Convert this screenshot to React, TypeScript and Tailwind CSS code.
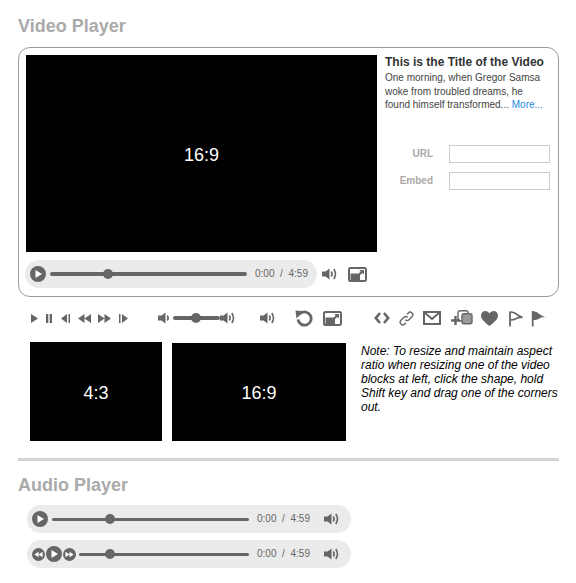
import React from "react";

const G = "#666666";

function Speaker({ low = false, className = "" }: { low?: boolean; className?: string }) {
  return (
    <svg width="15" height="14" viewBox="0 0 15 14" className={`shrink-0 ${className}`}>
      <path d="M0 4.500h3.500L7.500 1.500v11l-4-3H0z" fill={G} />
      <path d="M9.300 4.500c1 1.500 1 3.500 0 5" stroke={G} strokeWidth="1.600" fill="none" />
      {!low && <path d="M11.800 2c2 3 2 7 0 10" stroke={G} strokeWidth="1.600" fill="none" />}
    </svg>
  );
}

function Resize({ className = "" }: { className?: string }) {
  return (
    <svg width="19" height="15" viewBox="0 0 19 15" className={`shrink-0 ${className}`}>
      <rect x="1" y="1" width="17" height="13" rx="1.500" fill="#fff" stroke={G} strokeWidth="2" />
      <rect x="2.500" y="6.500" width="9.500" height="6.500" fill={G} />
      <path d="M11 3h5v4.500l-1.600-1.600-2.600 2.400-1.400-1.400 2.400-2.600z" fill={G} />
    </svg>
  );
}

function Round({ r, kind }: { r: number; kind: "play" | "back" | "fwd" }) {
  const s = r * 2;
  return (
    <svg width={s} height={s} viewBox="0 0 16 16" className="shrink-0">
      <circle cx="8" cy="8" r="8" fill={G} />
      {kind === "play" && <path d="M5.500 4l6.500 4-6.500 4z" fill="#fff" />}
      {kind === "back" && <path d="M8 4.500v7L3 8zM13 4.500v7L8 8z" fill="#fff" />}
      {kind === "fwd" && <path d="M3 4.500v7L8 8zM8 4.500v7l5-3.500z" fill="#fff" />}
    </svg>
  );
}

function Track({ knob, h = "h-[3px]", className = "" }: { knob: number; h?: string; className?: string }) {
  return (
    <div className={`relative flex-1 rounded-full bg-[#666] ${h} ${className}`}>
      <div className="absolute top-1/2 h-[10px] w-[10px] -translate-x-1/2 -translate-y-1/2 rounded-full bg-[#666]" style={{ left: knob }} />
    </div>
  );
}

function Time() {
  return (
    <div className="flex w-[53px] shrink-0 justify-between text-[10px] leading-none text-[#666]">
      <span>0:00</span>
      <span>/</span>
      <span>4:59</span>
    </div>
  );
}

function Small({ d, w = 9, vb = "0 0 9 9", className = "" }: { d: string; w?: number; vb?: string; className?: string }) {
  return (
    <svg width={w} height="9" viewBox={vb} className={`shrink-0 ${className}`}>
      <path d={d} fill={G} />
    </svg>
  );
}

function AudioPill({ extended = false }: { extended?: boolean }) {
  return (
    <div className="ml-[9px] flex h-[28px] w-[324px] items-center rounded-full bg-[#ebebeb] pr-[12px]">
      {extended ? (
        <div className="ml-[5px] mr-[3px] flex items-center gap-[1px]">
          <Round r={6.5} kind="back" />
          <Round r={8} kind="play" />
          <Round r={6.5} kind="fwd" />
        </div>
      ) : (
        <div className="ml-[5px] mr-[4px]">
          <Round r={8} kind="play" />
        </div>
      )}
      <Track knob={extended ? 31 : 58} />
      <div className="ml-[8px]">
        <Time />
      </div>
      <Speaker className="ml-[14px]" />
    </div>
  );
}

function Field({ label }: { label: string }) {
  return (
    <div className="flex items-center">
      <span className="w-[48px] text-right text-[10px] font-bold text-[#aaa]">{label}</span>
      <div className="ml-[16px] h-[18px] w-[101px] border border-[#ccc] bg-white" />
    </div>
  );
}

function Block({ label, w, h, className = "" }: { label: string; w: string; h: string; className?: string }) {
  return (
    <div className={`flex items-center justify-center bg-black pt-[3px] text-[18px] text-white ${w} ${h} ${className}`}>{label}</div>
  );
}

export default function App() {
  return (
    <div className="h-[583px] w-[576px] overflow-hidden bg-white pl-[18px] pt-[16px] font-['Liberation_Sans',Arial,sans-serif]">
      <h1 className="h-[20px] text-[18px] font-bold leading-[20px] text-[#aaa]">Video Player</h1>

      <section className="mt-[11px] flex h-[250px] w-[541px] rounded-[12px] border border-[#999] p-[7px]">
        <div className="w-[351px] shrink-0">
          <div className="flex h-[197px] w-[351px] items-center justify-center bg-black pt-[3px] text-[18px] text-white">16:9</div>
          <div className="mt-[8px] flex items-center">
            <div className="-ml-[1px] flex h-[28px] w-[292px] items-center rounded-full bg-[#ebebeb] pr-[9px]">
              <div className="ml-[5px] mr-[4px]">
                <Round r={8} kind="play" />
              </div>
              <Track knob={58} h="h-[4px]" />
              <div className="ml-[8px]">
                <Time />
              </div>
            </div>
            <Speaker className="ml-[5px]" />
            <Resize className="ml-[11px]" />
          </div>
        </div>
        <div className="ml-[8px] flex-1">
          <h2 className="text-[12px] font-bold leading-[14px] text-[#333]">This is the Title of the Video</h2>
          <p className="mt-[2px] w-[160px] text-[10px] leading-[13.5px] text-[#444]">
            One morning, when Gregor Samsa woke from troubled dreams, he found himself transformed...{" "}
            <span className="text-[#1e88e5]">More...</span>
          </p>
          <div className="mt-[33px] flex flex-col gap-[9px]">
            <Field label="URL" />
            <Field label="Embed" />
          </div>
        </div>
      </section>

      <div className="ml-[13px] mt-[13px] flex h-[16px] items-center">
        <Small w={7} vb="0 0 7 9" d="M0 0l7 4.500L0 9z" />
        <Small w={6} vb="0 0 6 9" d="M0 0h2.300v9H0zM3.700 0H6v9H3.700z" className="ml-[8px]" />
        <Small d="M6 0v9L0 4.500zM7.500 0H9v9H7.500z" className="ml-[9px]" />
        <Small w={13} vb="0 0 13 9" d="M6.500 0v9L0 4.500zM13 0v9L6.500 4.500z" className="ml-[8px]" />
        <Small w={13} vb="0 0 13 9" d="M0 0v9l6.500-4.500zM6.500 0v9L13 4.500z" className="ml-[7px]" />
        <Small d="M0 0h1.500v9H0zM3 0v9l6-4.500z" className="ml-[8px]" />
        <Speaker low className="ml-[30px]" />
        <div className="ml-[0px] flex w-[47px] items-center">
          <Track knob={23} h="h-[4px]" />
        </div>
        <Speaker className="ml-[0px]" />
        <Speaker className="ml-[25px]" />
        <svg width="18" height="17" viewBox="0 0 18 17" className="ml-[20px] shrink-0">
          <path d="M5.200 3.600A6.600 6.600 0 1 1 3 9.500" fill="none" stroke={G} strokeWidth="2.800" />
          <path d="M0.500 0.500l8.500.8L1.500 8.500z" fill={G} />
        </svg>
        <Resize className="ml-[10px]" />
        <svg width="16" height="12" viewBox="0 0 16 12" className="ml-[32px] shrink-0">
          <path d="M6 1L1.800 6 6 11M10 1l4.200 5L10 11" fill="none" stroke={G} strokeWidth="2.600" />
        </svg>
        <svg width="15" height="15" viewBox="0 0 15 15" className="ml-[9px] shrink-0">
          <path d="M6.300 8.700a2.600 2.600 0 0 0 3.700 0l3-3a2.600 2.600 0 0 0-3.700-3.700L8 3.300M8.700 6.300a2.600 2.600 0 0 0-3.700 0l-3 3a2.600 2.600 0 0 0 3.700 3.700L7 11.700" fill="none" stroke={G} strokeWidth="1.400" />
        </svg>
        <svg width="18" height="14" viewBox="0 0 18 14" className="ml-[9px] shrink-0">
          <rect x="1" y="1" width="16" height="12" fill="#fff" stroke={G} strokeWidth="2" />
          <path d="M1.500 1.500L9 8l7.500-6.500" fill="none" stroke={G} strokeWidth="1.800" />
        </svg>
        <svg width="22" height="17" viewBox="0 0 22 17" className="ml-[10px] shrink-0">
          <rect x="7" y="0.700" width="10" height="10" rx="2" fill="#fff" stroke={G} strokeWidth="1.400" />
          <rect x="11" y="3.700" width="10" height="10" rx="2" fill="#999" stroke={G} strokeWidth="1.400" />
          <path d="M0 10.500h9M4.500 6v9" stroke={G} strokeWidth="2.400" />
        </svg>
        <svg width="17" height="15" viewBox="0 0 17 15" className="ml-[8px] shrink-0">
          <path d="M8.500 15C3 10.500 0 8 0 4.500 0 2 2 0 4.400 0c1.700 0 3.200.9 4.100 2.400C9.400.9 10.900 0 12.600 0 15 0 17 2 17 4.500 17 8 14 10.500 8.500 15z" fill={G} />
        </svg>
        <svg width="16" height="17" viewBox="0 0 16 17" className="ml-[10px] shrink-0">
          <path d="M2 16.500V1.500" stroke={G} strokeWidth="1.800" />
          <path d="M2.500 2c4 0 5 1 7 3l5 2.500c-3-.5-4.500 0-6 1-2 1-4 1.500-6 1.500" fill="none" stroke={G} strokeWidth="1.600" />
        </svg>
        <svg width="15" height="17" viewBox="0 0 15 17" className="ml-[7px] shrink-0">
          <path d="M1.700 16.500V1" stroke={G} strokeWidth="1.800" />
          <path d="M2 1.500c4 0 5 1.500 7 3l5.500 3c-3-.5-4.500 0-6 1-2 1-4 1.500-6.500 1.500z" fill={G} />
        </svg>
      </div>

      <div className="mt-[16px] flex items-start pl-[12px]">
        <Block label="4:3" w="w-[132px]" h="h-[99px]" />
        <Block label="16:9" w="w-[174px]" h="h-[98px]" className="ml-[10px] mt-[1px]" />
        <p className="ml-[15px] mt-[2px] w-[197px] text-[12px] italic leading-[14px] text-black">
          Note: To resize and maintain aspect ratio when resizing one of the video blocks at left, click the shape, hold Shift key and drag one of the corners out.
        </p>
      </div>

      <div className="mt-[17px] h-[3px] w-[541px] bg-[#d4d4d4]" />

      <h1 className="mt-[14px] h-[20px] text-[18px] font-bold leading-[20px] text-[#aaa]">Audio Player</h1>
      <div className="mt-[10px] flex flex-col gap-[7px]">
        <AudioPill />
        <AudioPill extended />
      </div>
    </div>
  );
}
